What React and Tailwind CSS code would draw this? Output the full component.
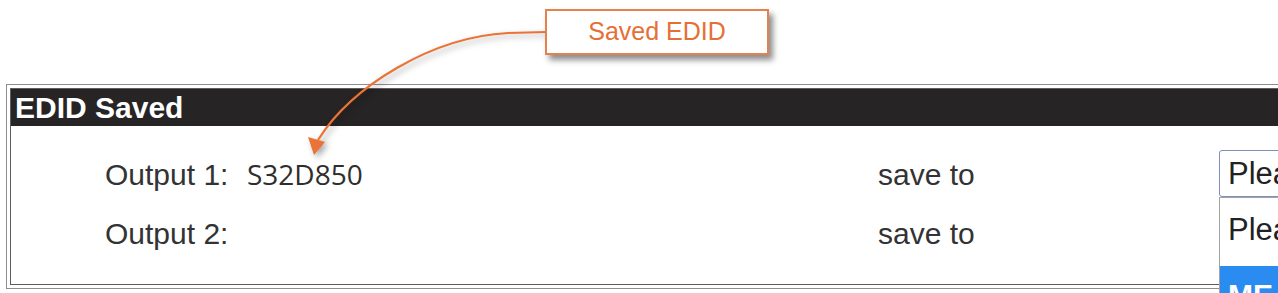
export default function App() {
  return (
    <div
      className="relative w-[1278px] h-[293px] overflow-hidden bg-white"
      style={{ fontFamily: '"Liberation Sans", Arial, sans-serif' }}
    >
      {/* panel */}
      <div className="absolute left-[6px] top-[84px] w-[1290px] border border-[#8e8e8e] p-[3px]">
        <div className="border border-[#5e5e5e]">
          <div className="h-[37px] bg-[#272425] flex items-center pl-[4px] text-white font-bold text-[30px] leading-none">
            EDID Saved
          </div>
          <div className="flex flex-col gap-3 pt-6 pb-[26px] pl-[94px] text-[30px] text-[#333]">
            <div className="h-[48px] flex items-baseline leading-[48px]">
              <div className="w-[142px] shrink-0">Output 1:</div>
              <div
                className="w-[631px] shrink-0 text-[28px] text-[#2e2e2e]"
                style={{ fontFamily: '"Open Sans", sans-serif' }}
              >
                S32D850
              </div>
              <div className="w-[341px] shrink-0">save to</div>
              <div className="relative shrink-0 self-start">
                <div className="w-[200px] h-[47px] border border-[#7d90ba] rounded-[3px] bg-white flex items-center pl-[8px] text-[31px] leading-none text-[#222]">
                  Please select
                </div>
                <div className="absolute left-0 top-full w-[200px] h-[110px] bg-white border border-[#a3a3a3] flex flex-col">
                  <div className="h-[68px] shrink-0 pl-[8px] pt-[16px] text-[31px] leading-none text-[#222]">
                    Please select
                  </div>
                  <div className="flex-1 bg-[#2a8bf0] pl-[8px] pt-[14px] text-[30px] leading-none text-white font-bold">
                    ME
                  </div>
                </div>
              </div>
            </div>
            <div className="h-[48px] flex items-baseline leading-[48px]">
              <div className="w-[142px] shrink-0">Output 2:</div>
              <div className="w-[631px] shrink-0"></div>
              <div className="w-[341px] shrink-0">save to</div>
            </div>
          </div>
        </div>
      </div>

      {/* callout arrow */}
      <svg
        className="absolute left-0 top-0 pointer-events-none drop-shadow-[3px_3px_3px_rgba(0,0,0,0.35)]"
        width="1278"
        height="293"
        viewBox="0 0 1278 293"
      >
        <path
          d="M546 32 L508 33 C432 37 352 86 318 140"
          fill="none"
          stroke="#ea7335"
          strokeWidth="2.2"
        />
        <path d="M314 155 L308 137 L325 142 Z" fill="#ea7335" />
      </svg>

      {/* callout box */}
      <div className="absolute left-[545px] top-[9px] w-[224px] h-[46px] border-2 border-[#e2834e] bg-white shadow-[4px_5px_6px_rgba(0,0,0,0.45)] flex items-center justify-center text-[25px] text-[#e66f35]">
        Saved EDID
      </div>
    </div>
  );
}
